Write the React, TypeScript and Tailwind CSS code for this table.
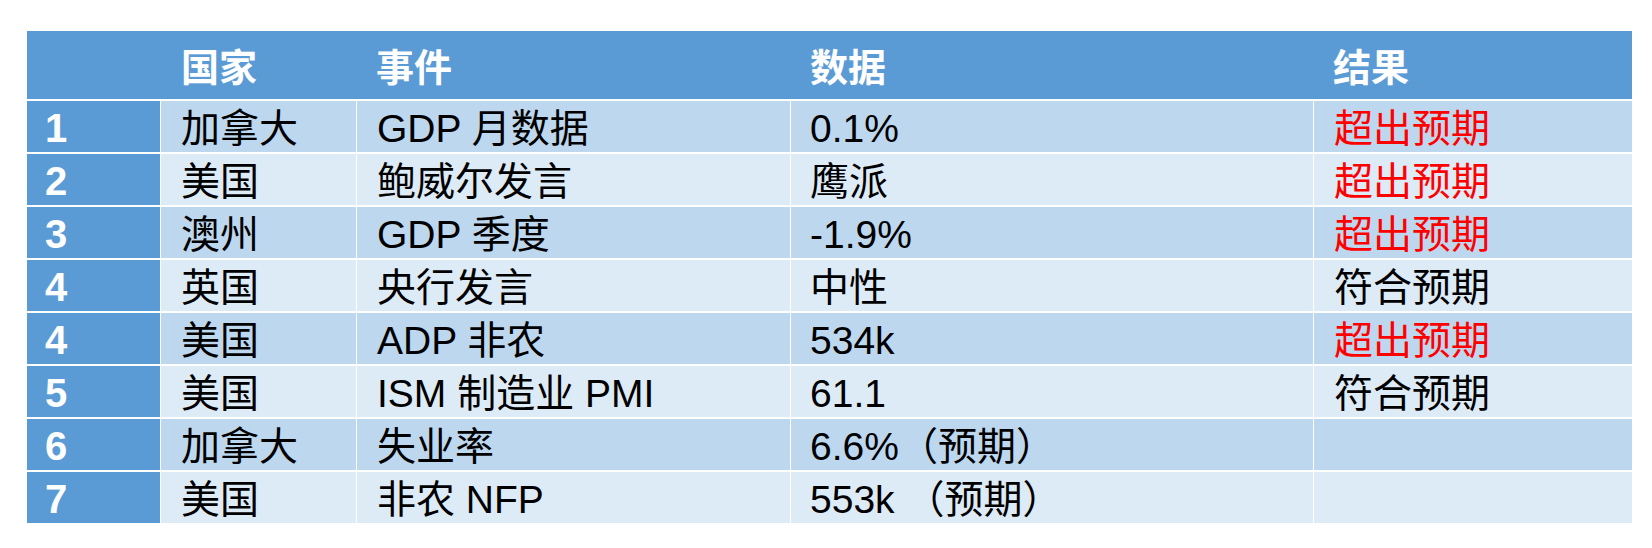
const COLS = ["w-[133px]", "w-[195px]", "w-[433px]", "w-[522px]", "w-[318px]"];

type Row = {
  no: string;
  country: string;
  event: string;
  data: string;
  result: string;
  hot?: boolean;
};

const ROWS: Row[] = [
  { no: "1", country: "加拿大", event: "GDP 月数据", data: "0.1%", result: "超出预期", hot: true },
  { no: "2", country: "美国", event: "鲍威尔发言", data: "鹰派", result: "超出预期", hot: true },
  { no: "3", country: "澳州", event: "GDP 季度", data: "-1.9%", result: "超出预期", hot: true },
  { no: "4", country: "英国", event: "央行发言", data: "中性", result: "符合预期" },
  { no: "4", country: "美国", event: "ADP 非农", data: "534k", result: "超出预期", hot: true },
  { no: "5", country: "美国", event: "ISM 制造业 PMI", data: "61.1", result: "符合预期" },
  { no: "6", country: "加拿大", event: "失业率", data: "6.6%（预期）", result: "" },
  { no: "7", country: "美国", event: "非农 NFP", data: "553k （预期）", result: "" },
];

const FONT = "font-['Liberation_Sans','Noto_Sans_CJK_SC',sans-serif]";

export default function App() {
  return (
    <div className={`h-[548px] w-[1652px] bg-white pl-[27px] pt-[31px] ${FONT}`}>
      <div className="flex w-[1605px] flex-col gap-[2px]">
        {/* Header bar */}
        <div className="flex h-[68px] gap-[1px] bg-[#5b9bd5] text-[38px] font-bold leading-none text-white">
          <div className={COLS[0]} />
          <div className={`${COLS[1]} flex items-center pl-[20px] pt-[5px]`}>国家</div>
          <div className={`${COLS[2]} flex items-center pl-[19px] pt-[5px]`}>事件</div>
          <div className={`${COLS[3]} flex items-center pl-[19px] pt-[5px]`}>数据</div>
          <div className={`${COLS[4]} flex items-center pl-[19px] pt-[5px]`}>结果</div>
        </div>

        {ROWS.map((r, i) => {
          const bg = i % 2 === 0 ? "bg-[#bdd7ee]" : "bg-[#ddebf7]";
          return (
            <div key={i} className="flex h-[51px] gap-[1px] text-[39px] leading-none text-black">
              <div className={`${COLS[0]} flex items-center bg-[#5b9bd5] pl-[18px] pt-[2px] text-[40px] font-bold text-white`}>
                {r.no}
              </div>
              <div className={`${COLS[1]} ${bg} flex items-center pl-[20px] pt-[3px]`}>{r.country}</div>
              <div className={`${COLS[2]} ${bg} flex items-center pl-[20px] pt-[3px]`}>{r.event}</div>
              <div className={`${COLS[3]} ${bg} flex items-center pl-[19px] pt-[3px] whitespace-pre`}>{r.data}</div>
              <div
                className={`${COLS[4]} ${bg} flex items-center pl-[20px] pt-[3px] ${
                  r.hot ? "text-[#ff0000]" : "text-black"
                }`}
              >
                {r.result}
              </div>
            </div>
          );
        })}
      </div>
    </div>
  );
}
